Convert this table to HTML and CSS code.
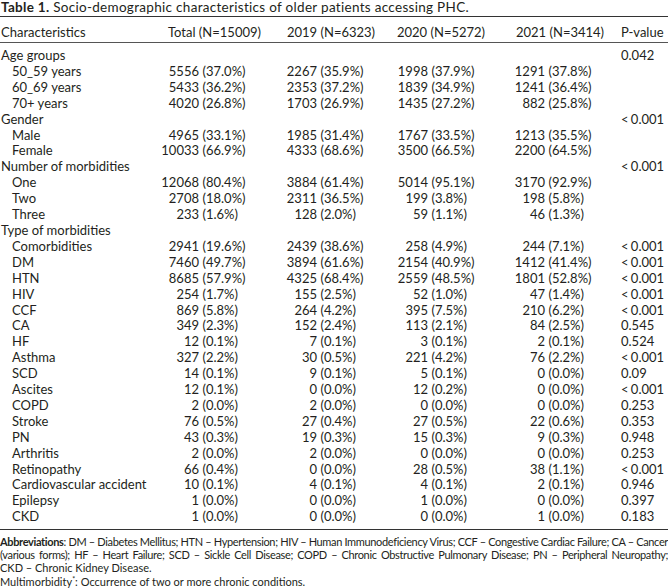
FILE: index.html
```html
<!DOCTYPE html>
<html>
<head>
<meta charset="utf-8">
<link rel="stylesheet" href="styles.css">
</head>
<body>
<div class="page">
  <p class="title"><b>Table 1.</b> Socio-demographic characteristics of older patients accessing PHC.</p>
  <div class="table">
    <div class="row head">
      <div class="c0">Characteristics</div>
      <div class="h h1">Total (N=15009)</div>
      <div class="h h2">2019 (N=6323)</div>
      <div class="h h3">2020 (N=5272)</div>
      <div class="h h4">2021 (N=3414)</div>
      <div class="pv">P-value</div>
    </div>
    <div class="body">
      <div class="row grp"><div class="c0">Age groups</div><div class="pv">0.042</div></div>
      <div class="row sub"><div class="c0">50_59 years</div><div class="n">5556</div><div class="p">(37.0%)</div><div class="n">2267</div><div class="p">(35.9%)</div><div class="n">1998</div><div class="p">(37.9%)</div><div class="n">1291</div><div class="p">(37.8%)</div><div class="pv"></div></div>
      <div class="row sub"><div class="c0">60_69 years</div><div class="n">5433</div><div class="p">(36.2%)</div><div class="n">2353</div><div class="p">(37.2%)</div><div class="n">1839</div><div class="p">(34.9%)</div><div class="n">1241</div><div class="p">(36.4%)</div><div class="pv"></div></div>
      <div class="row sub"><div class="c0">70+ years</div><div class="n">4020</div><div class="p">(26.8%)</div><div class="n">1703</div><div class="p">(26.9%)</div><div class="n">1435</div><div class="p">(27.2%)</div><div class="n">882</div><div class="p">(25.8%)</div><div class="pv"></div></div>
      <div class="row grp"><div class="c0">Gender</div><div class="pv">&lt; 0.001</div></div>
      <div class="row sub"><div class="c0">Male</div><div class="n">4965</div><div class="p">(33.1%)</div><div class="n">1985</div><div class="p">(31.4%)</div><div class="n">1767</div><div class="p">(33.5%)</div><div class="n">1213</div><div class="p">(35.5%)</div><div class="pv"></div></div>
      <div class="row sub"><div class="c0">Female</div><div class="n">10033</div><div class="p">(66.9%)</div><div class="n">4333</div><div class="p">(68.6%)</div><div class="n">3500</div><div class="p">(66.5%)</div><div class="n">2200</div><div class="p">(64.5%)</div><div class="pv"></div></div>
      <div class="row grp"><div class="c0">Number of morbidities</div><div class="pv">&lt; 0.001</div></div>
      <div class="row sub"><div class="c0">One</div><div class="n">12068</div><div class="p">(80.4%)</div><div class="n">3884</div><div class="p">(61.4%)</div><div class="n">5014</div><div class="p">(95.1%)</div><div class="n">3170</div><div class="p">(92.9%)</div><div class="pv"></div></div>
      <div class="row sub"><div class="c0">Two</div><div class="n">2708</div><div class="p">(18.0%)</div><div class="n">2311</div><div class="p">(36.5%)</div><div class="n">199</div><div class="p">(3.8%)</div><div class="n">198</div><div class="p">(5.8%)</div><div class="pv"></div></div>
      <div class="row sub"><div class="c0">Three</div><div class="n">233</div><div class="p">(1.6%)</div><div class="n">128</div><div class="p">(2.0%)</div><div class="n">59</div><div class="p">(1.1%)</div><div class="n">46</div><div class="p">(1.3%)</div><div class="pv"></div></div>
      <div class="row grp"><div class="c0">Type of morbidities</div></div>
      <div class="row sub"><div class="c0">Comorbidities</div><div class="n">2941</div><div class="p">(19.6%)</div><div class="n">2439</div><div class="p">(38.6%)</div><div class="n">258</div><div class="p">(4.9%)</div><div class="n">244</div><div class="p">(7.1%)</div><div class="pv">&lt; 0.001</div></div>
      <div class="row sub"><div class="c0">DM</div><div class="n">7460</div><div class="p">(49.7%)</div><div class="n">3894</div><div class="p">(61.6%)</div><div class="n">2154</div><div class="p">(40.9%)</div><div class="n">1412</div><div class="p">(41.4%)</div><div class="pv">&lt; 0.001</div></div>
      <div class="row sub"><div class="c0">HTN</div><div class="n">8685</div><div class="p">(57.9%)</div><div class="n">4325</div><div class="p">(68.4%)</div><div class="n">2559</div><div class="p">(48.5%)</div><div class="n">1801</div><div class="p">(52.8%)</div><div class="pv">&lt; 0.001</div></div>
      <div class="row sub"><div class="c0">HIV</div><div class="n">254</div><div class="p">(1.7%)</div><div class="n">155</div><div class="p">(2.5%)</div><div class="n">52</div><div class="p">(1.0%)</div><div class="n">47</div><div class="p">(1.4%)</div><div class="pv">&lt; 0.001</div></div>
      <div class="row sub"><div class="c0">CCF</div><div class="n">869</div><div class="p">(5.8%)</div><div class="n">264</div><div class="p">(4.2%)</div><div class="n">395</div><div class="p">(7.5%)</div><div class="n">210</div><div class="p">(6.2%)</div><div class="pv">&lt; 0.001</div></div>
      <div class="row sub"><div class="c0">CA</div><div class="n">349</div><div class="p">(2.3%)</div><div class="n">152</div><div class="p">(2.4%)</div><div class="n">113</div><div class="p">(2.1%)</div><div class="n">84</div><div class="p">(2.5%)</div><div class="pv">0.545</div></div>
      <div class="row sub"><div class="c0">HF</div><div class="n">12</div><div class="p">(0.1%)</div><div class="n">7</div><div class="p">(0.1%)</div><div class="n">3</div><div class="p">(0.1%)</div><div class="n">2</div><div class="p">(0.1%)</div><div class="pv">0.524</div></div>
      <div class="row sub"><div class="c0">Asthma</div><div class="n">327</div><div class="p">(2.2%)</div><div class="n">30</div><div class="p">(0.5%)</div><div class="n">221</div><div class="p">(4.2%)</div><div class="n">76</div><div class="p">(2.2%)</div><div class="pv">&lt; 0.001</div></div>
      <div class="row sub"><div class="c0">SCD</div><div class="n">14</div><div class="p">(0.1%)</div><div class="n">9</div><div class="p">(0.1%)</div><div class="n">5</div><div class="p">(0.1%)</div><div class="n">0</div><div class="p">(0.0%)</div><div class="pv">0.09</div></div>
      <div class="row sub"><div class="c0">Ascites</div><div class="n">12</div><div class="p">(0.1%)</div><div class="n">0</div><div class="p">(0.0%)</div><div class="n">12</div><div class="p">(0.2%)</div><div class="n">0</div><div class="p">(0.0%)</div><div class="pv">&lt; 0.001</div></div>
      <div class="row sub"><div class="c0">COPD</div><div class="n">2</div><div class="p">(0.0%)</div><div class="n">2</div><div class="p">(0.0%)</div><div class="n">0</div><div class="p">(0.0%)</div><div class="n">0</div><div class="p">(0.0%)</div><div class="pv">0.253</div></div>
      <div class="row sub"><div class="c0">Stroke</div><div class="n">76</div><div class="p">(0.5%)</div><div class="n">27</div><div class="p">(0.4%)</div><div class="n">27</div><div class="p">(0.5%)</div><div class="n">22</div><div class="p">(0.6%)</div><div class="pv">0.353</div></div>
      <div class="row sub"><div class="c0">PN</div><div class="n">43</div><div class="p">(0.3%)</div><div class="n">19</div><div class="p">(0.3%)</div><div class="n">15</div><div class="p">(0.3%)</div><div class="n">9</div><div class="p">(0.3%)</div><div class="pv">0.948</div></div>
      <div class="row sub"><div class="c0">Arthritis</div><div class="n">2</div><div class="p">(0.0%)</div><div class="n">2</div><div class="p">(0.0%)</div><div class="n">0</div><div class="p">(0.0%)</div><div class="n">0</div><div class="p">(0.0%)</div><div class="pv">0.253</div></div>
      <div class="row sub"><div class="c0">Retinopathy</div><div class="n">66</div><div class="p">(0.4%)</div><div class="n">0</div><div class="p">(0.0%)</div><div class="n">28</div><div class="p">(0.5%)</div><div class="n">38</div><div class="p">(1.1%)</div><div class="pv">&lt; 0.001</div></div>
      <div class="row sub"><div class="c0">Cardiovascular accident</div><div class="n">10</div><div class="p">(0.1%)</div><div class="n">4</div><div class="p">(0.1%)</div><div class="n">4</div><div class="p">(0.1%)</div><div class="n">2</div><div class="p">(0.1%)</div><div class="pv">0.946</div></div>
      <div class="row sub"><div class="c0">Epilepsy</div><div class="n">1</div><div class="p">(0.0%)</div><div class="n">0</div><div class="p">(0.0%)</div><div class="n">1</div><div class="p">(0.0%)</div><div class="n">0</div><div class="p">(0.0%)</div><div class="pv">0.397</div></div>
      <div class="row sub"><div class="c0">CKD</div><div class="n">1</div><div class="p">(0.0%)</div><div class="n">0</div><div class="p">(0.0%)</div><div class="n">0</div><div class="p">(0.0%)</div><div class="n">1</div><div class="p">(0.0%)</div><div class="pv">0.183</div></div>
    </div>
  </div>
  <div class="notes">
    <div class="line just"><b>Abbreviations</b>: DM – Diabetes Mellitus; HTN – Hypertension; HIV – Human Immunodeficiency Virus; CCF – Congestive Cardiac Failure; CA – Cancer</div>
    <div class="line just">(various forms); HF – Heart Failure; SCD – Sickle Cell Disease; COPD – Chronic Obstructive Pulmonary Disease; PN – Peripheral Neuropathy;</div>
    <div class="line">CKD – Chronic Kidney Disease.</div>
    <div class="line">Multimorbidity<sup>*</sup>: Occurrence of two or more chronic conditions.</div>
  </div>
</div>
</body>
</html>
```

FILE: styles.css
```css
html, body {
  margin: 0;
  padding: 0;
  background: #ffffff;
}

body {
  font-family: Lato, "Noto Sans", "DejaVu Sans", sans-serif;
  font-size: 13px;
  color: #231f20;
}

.page {
  width: 668px;
}

.title {
  margin: 0 0 2px 0;
  padding-left: 1px;
  font-size: 13.5px;
  line-height: 14px;
  letter-spacing: 0.3px;
  white-space: nowrap;
}

.title b {
  font-weight: 700;
}

.table {
  border-top: 1px solid #333333;
  border-bottom: 1px solid #333333;
}

.row {
  display: grid;
  grid-template-columns: 150px 49px 66px 52px 61px 50px 68px 49px 76px 47px;
  line-height: 15.9px;
  white-space: nowrap;
}

.head {
  padding: 7px 0 2px 0;
  border-bottom: 1px solid #555555;
  line-height: 16px;
}

.body {
  padding: 5px 0 4px 0;
}

.c0 {
  padding-left: 1px;
}

.sub .c0 {
  padding-left: 12px;
}

.h {
  grid-column: span 2;
}

.h1 { padding-left: 18px; }
.h2 { padding-left: 22px; }
.h3 { padding-left: 19px; }
.h4 { padding-left: 20px; }

.n {
  text-align: right;
}

.p {
  padding-left: 3.5px;
}

.pv {
  grid-column: 10;
  word-spacing: -1px;
}

.notes {
  padding-top: 4.4px;
  font-size: 11px;
  line-height: 13.4px;
}

.line {
  white-space: nowrap;
}

.just {
  text-align: justify;
  text-align-last: justify;
  letter-spacing: -0.35px;
}

.notes sup {
  font-size: 7px;
  line-height: 0;
  vertical-align: 4px;
}
```
